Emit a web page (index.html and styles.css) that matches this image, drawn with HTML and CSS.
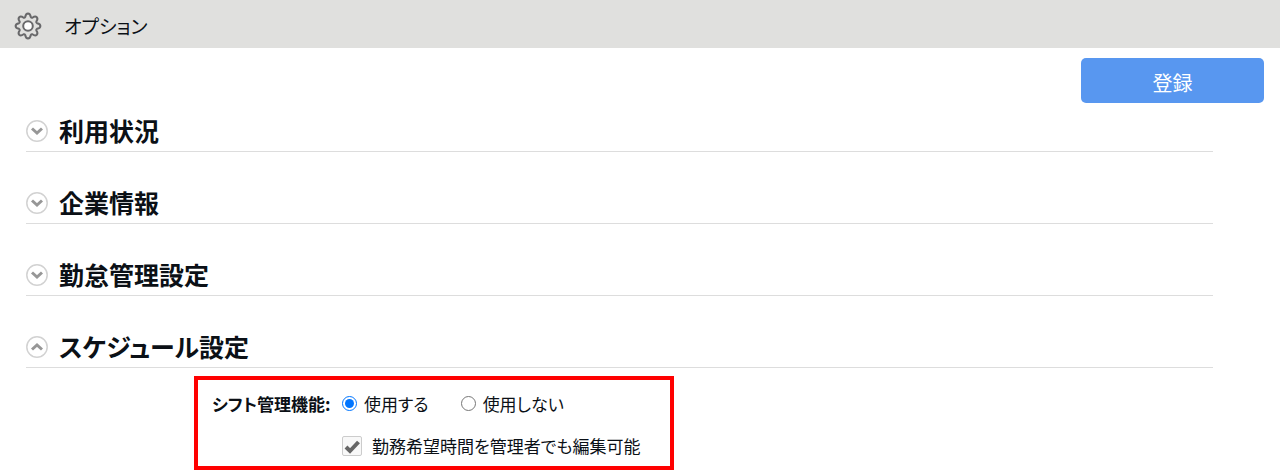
FILE: index.html
```
<!DOCTYPE html>
<html lang="ja">
<head>
  <meta charset="UTF-8">
  <title>オプション</title>
  <link rel="stylesheet" href="styles.css">
</head>
<body>
  <header class="header">
    <svg class="gear" viewBox="-14 -14 28 28">
      <path d="M-2.8 -9 Q-2.2 -12.4 0 -12.4 Q2.2 -12.4 2.8 -9 Q3.4 -8 4.4 -8.3 Q7.2 -10.3 8.8 -8.8 Q10.3 -7.2 8.3 -4.4 Q8 -3.4 9 -2.8 Q12.4 -2.2 12.4 0 Q12.4 2.2 9 2.8 Q8 3.4 8.3 4.4 Q10.3 7.2 8.8 8.8 Q7.2 10.3 4.4 8.3 Q3.4 8 2.8 9 Q2.2 12.4 0 12.4 Q-2.2 12.4 -2.8 9 Q-3.4 8 -4.4 8.3 Q-7.2 10.3 -8.8 8.8 Q-10.3 7.2 -8.3 4.4 Q-8 3.4 -9 2.8 Q-12.4 2.2 -12.4 0 Q-12.4 -2.2 -9 -2.8 Q-8 -3.4 -8.3 -4.4 Q-10.3 -7.2 -8.8 -8.8 Q-7.2 -10.3 -4.4 -8.3 Q-3.4 -8 -2.8 -9 Z"/>
      <circle class="gear-hole" r="4.8"/>
    </svg>
    <h1>オプション</h1>
  </header>

  <form class="options">
    <div class="actions">
      <button type="submit" class="submit">登録</button>
    </div>

    <h2 class="section">
      <button type="button" class="toggle" aria-expanded="false">
        <svg class="arrow" viewBox="0 0 22 22"><circle cx="11" cy="11" r="10.2"/><path d="M6 8.5 L11 13 L16 8.5"/></svg>
        利用状況
      </button>
    </h2>
    <h2 class="section">
      <button type="button" class="toggle" aria-expanded="false">
        <svg class="arrow" viewBox="0 0 22 22"><circle cx="11" cy="11" r="10.2"/><path d="M6 8.5 L11 13 L16 8.5"/></svg>
        企業情報
      </button>
    </h2>
    <h2 class="section">
      <button type="button" class="toggle" aria-expanded="false">
        <svg class="arrow" viewBox="0 0 22 22"><circle cx="11" cy="11" r="10.2"/><path d="M6 8.5 L11 13 L16 8.5"/></svg>
        勤怠管理設定
      </button>
    </h2>
    <h2 class="section">
      <button type="button" class="toggle" aria-expanded="true">
        <svg class="arrow" viewBox="0 0 22 22"><circle cx="11" cy="11" r="10.2"/><path d="M6 13.5 L11 9 L16 13.5"/></svg>
        スケジュール設定
      </button>
    </h2>

    <div class="shift" role="group" aria-labelledby="shift-title">
      <span id="shift-title" class="shift-title">シフト管理機能:</span>
      <div class="choices">
        <label><input type="radio" name="shift" value="1" checked>使用する</label>
        <label><input type="radio" name="shift" value="0">使用しない</label>
      </div>
      <label class="check">
        <span class="box">
          <input type="checkbox" name="edit" checked>
          <svg class="tick" viewBox="0 0 20 20"><path d="M4 11 L8 15 L16.500 6"/></svg>
        </span>
        勤務希望時間を管理者でも編集可能
      </label>
    </div>
  </form>
</body>
</html>
```
FILE: styles.css
```
body {
  margin: 0;
  background-color: #fff;
  color: #0b1016;
  font-family: "Noto Sans CJK JP", sans-serif;
  font-size: 17px;
  line-height: 24px;
  font-feature-settings: "palt";
}

button {
  padding: 0;
  border: none;
  font: inherit;
  font-feature-settings: inherit;
  cursor: pointer;
}

.header {
  display: flex;
  align-items: center;
  gap: 22px;
  height: 48px;
  padding: 4px 14px 0;
  box-sizing: border-box;
  background-color: #e0e0de;
}

.header h1 {
  margin: 0;
  font-size: 19px;
  font-weight: normal;
}

.gear {
  width: 28px;
  height: 28px;
  fill: none;
  stroke: #68686a;
  stroke-width: 2;
  stroke-linejoin: round;
}

.gear-hole {
  fill: #fff;
}

.actions {
  display: flex;
  justify-content: flex-end;
  padding: 10px 16px 0;
}

.submit {
  width: 183px;
  height: 45px;
  padding-top: 4px;
  border-radius: 5px;
  background-color: #5897f0;
  color: #fff;
  font-size: 20px;
}

.section {
  margin: 0 67px 32px 26px;
  padding-bottom: 2px;
  border-bottom: 1px solid #ddd;
  font-size: 25px;
  line-height: 37px;
}

.actions + .section {
  margin-top: 9px;
}

.toggle {
  display: flex;
  align-items: center;
  gap: 11px;
  width: 100%;
  background: none;
  color: #0b1016;
}

.arrow {
  width: 22px;
  height: 22px;
  fill: none;
}

.arrow circle {
  stroke: #d2d2d2;
  stroke-width: 1.5;
}

.arrow path {
  stroke: #979797;
  stroke-width: 3;
}

.shift {
  display: grid;
  grid-template-columns: 118px 1fr;
  gap: 18px 12px;
  max-width: 480px;
  margin: -24px 0 4px 194px;
  padding: 12px 14px 8px;
  box-sizing: border-box;
  border: 4px solid #f00;
}

.shift-title {
  font-weight: bold;
  white-space: nowrap;
}

.choices {
  display: flex;
  gap: 32px;
}

.choices label,
.check {
  display: flex;
  align-items: center;
}

.choices input {
  width: 15px;
  height: 15px;
  margin: 0 7px 2px 0;
}

.check {
  grid-column: 2;
  gap: 10px;
}

.box {
  position: relative;
  width: 20px;
  height: 20px;
}

.box input {
  appearance: none;
  display: block;
  width: 20px;
  height: 20px;
  margin: 0;
  border: 1px solid #ccc;
  border-radius: 2px;
  background-color: #f8f8f8;
}

.tick {
  position: absolute;
  top: 0;
  left: 0;
  display: none;
  width: 20px;
  height: 20px;
  fill: none;
  stroke: #666;
  stroke-width: 4;
  pointer-events: none;
}

.box input:checked + .tick {
  display: block;
}
```
